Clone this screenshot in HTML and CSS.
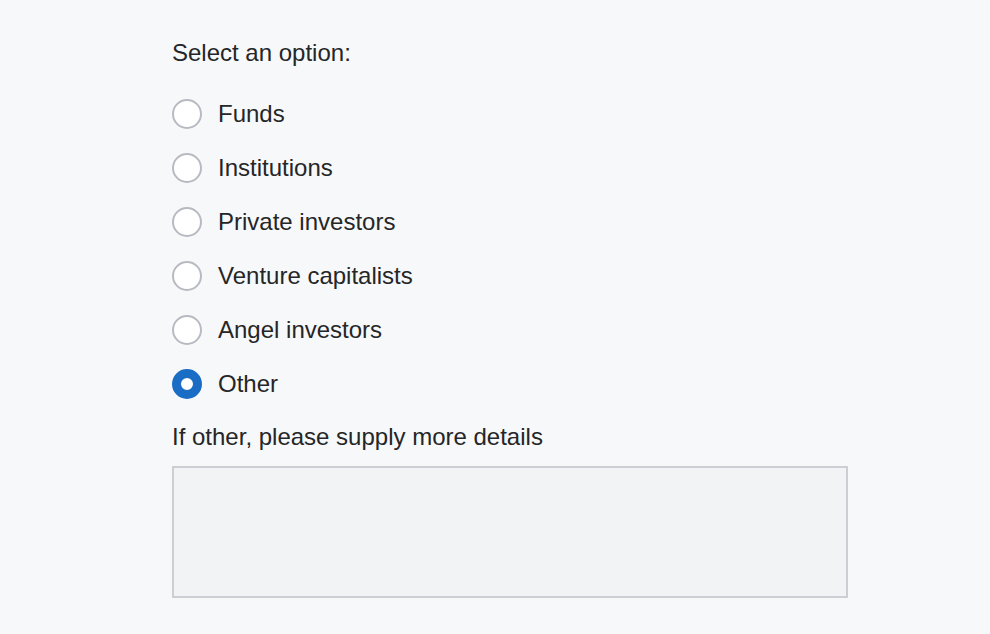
FILE: index.html
```html
<!DOCTYPE html>
<html lang="en">
<head>
<meta charset="utf-8">
<link rel="stylesheet" href="styles.css">
</head>
<body>
<form class="form">
  <div class="question">Select an option:</div>
  <div class="options">
    <label class="option"><span class="radio"></span><span class="text">Funds</span></label>
    <label class="option"><span class="radio"></span><span class="text">Institutions</span></label>
    <label class="option"><span class="radio"></span><span class="text">Private investors</span></label>
    <label class="option"><span class="radio"></span><span class="text">Venture capitalists</span></label>
    <label class="option"><span class="radio"></span><span class="text">Angel investors</span></label>
    <label class="option"><span class="radio checked"></span><span class="text">Other</span></label>
  </div>
  <div class="details-label">If other, please supply more details</div>
  <div class="details-box"></div>
</form>
</body>
</html>
```

FILE: styles.css
```css
html, body {
  margin: 0;
  padding: 0;
  background: #f7f8fa;
}
body {
  font-family: "Liberation Sans", Arial, sans-serif;
  font-size: 24px;
  color: #252627;
}
.form {
  display: flex;
  flex-direction: column;
  padding: 38px 0 0 172px;
  width: 676px;
}
.question {
  line-height: 30px;
}
.options {
  display: flex;
  flex-direction: column;
  gap: 24px;
  margin-top: 31px;
}
.option {
  display: flex;
  align-items: center;
  height: 30px;
  line-height: 30px;
}
.radio {
  box-sizing: border-box;
  width: 30px;
  height: 30px;
  border: 2px solid #b7bbc1;
  border-radius: 50%;
  background: #ffffff;
  flex: none;
}
.radio.checked {
  border: 9px solid #1a6dc5;
  background: #ffffff;
}
.text {
  margin-left: 16px;
}
.details-label {
  margin-top: 23px;
  line-height: 30px;
}
.details-box {
  box-sizing: border-box;
  margin-top: 14px;
  height: 132px;
  border: 2px solid #cbced3;
  background: #f2f3f5;
}
```
